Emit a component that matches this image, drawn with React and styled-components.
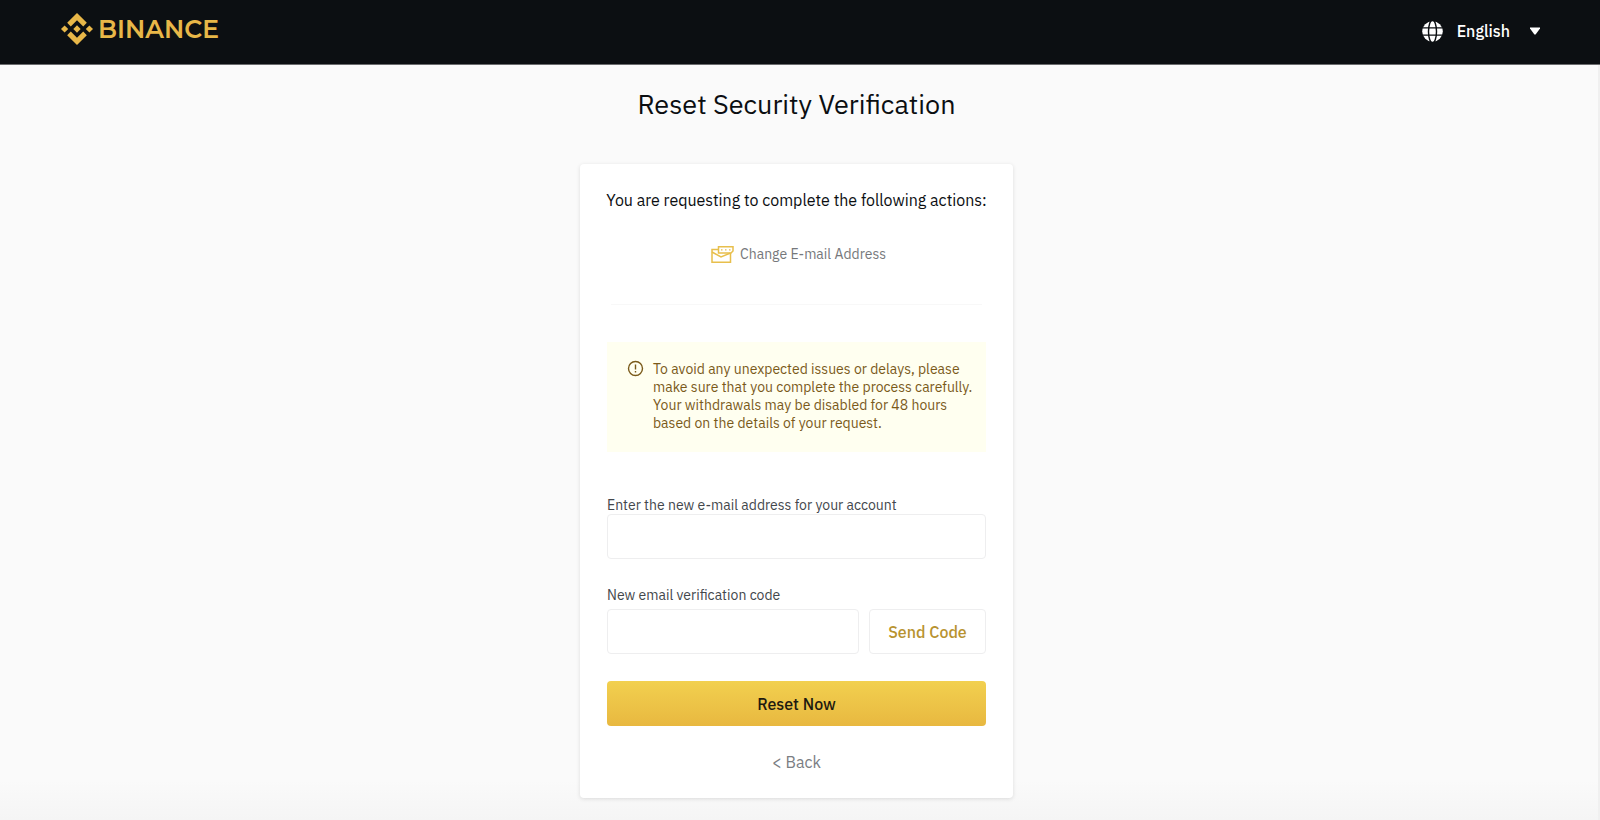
import React, { useState } from 'react';
import styled, { createGlobalStyle } from 'styled-components';

const GlobalStyle = createGlobalStyle`
  * {
    box-sizing: border-box;
  }

  body {
    margin: 0;
    background: #fafafa;
    color: #0b0e11;
    font-family: 'IBM Plex Sans', Roboto, 'Liberation Sans', sans-serif;
  }

  button,
  input {
    font-family: inherit;
  }
`;

const Page = styled.div`
  display: flex;
  flex-direction: column;
  min-height: 100vh;
  background: linear-gradient(to top, #f5f5f5, #fafafa 40px);
`;

const Header = styled.header`
  display: flex;
  justify-content: space-between;
  align-items: center;
  height: 65px;
  padding: 0 60px 2px 61px;
  background: #0c0f12;
  border-bottom: 1px solid #6b6c6e;
`;

const Brand = styled.a`
  display: flex;
  align-items: center;
  gap: 5px;
  padding-bottom: 4px;
  color: #e8b748;
  font-family: Montserrat, Lato, 'Open Sans', sans-serif;
  font-size: 25px;
  font-weight: 600;
  line-height: 32px;
  text-decoration: none;
`;

const LanguageButton = styled.button`
  display: flex;
  align-items: center;
  padding: 0;
  background: none;
  border: none;
  color: #fff;
  font-size: 16px;
  font-weight: 500;
  line-height: 22px;
  cursor: pointer;
`;

const LanguageName = styled.span`
  margin: 0 20px 0 14px;
`;

const Main = styled.main`
  flex: 1;
  display: flex;
  flex-direction: column;
  align-items: center;
  padding: 19px 5px 21px 0;
  border-right: 2px solid #f0f0f0;
`;

const Title = styled.h1`
  margin: 0 0 40px;
  font-size: 27px;
  font-weight: 400;
  line-height: 40px;
`;

const Card = styled.form`
  width: 100%;
  max-width: 433px;
  padding: 24px 27px;
  background: #fff;
  border-radius: 4px;
  box-shadow: 0 1px 4px rgba(0, 0, 0, 0.12);
`;

const Intro = styled.p`
  margin: 0 -8px;
  font-size: 16px;
  line-height: 24px;
  text-align: center;
`;

const Action = styled.div`
  display: flex;
  justify-content: center;
  align-items: center;
  gap: 6px;
  padding: 32px 0 40px 4px;
  color: #76787b;
  font-size: 14px;
  line-height: 20px;
`;

const Divider = styled.hr`
  margin: 0 4px 37px;
  border: none;
  border-top: 1px solid #f8f8f8;
`;

const Notice = styled.div`
  display: flex;
  align-items: flex-start;
  gap: 9px;
  margin-bottom: 44px;
  padding: 18px 8px 20px 20px;
  background: #fffff0;
  color: #7a5a1a;
  font-size: 14px;
  line-height: 18px;
`;

const NoticeText = styled.p`
  margin: 0;
`;

const Label = styled.label`
  display: block;
  margin-bottom: ${({ $gap }) => $gap || 0}px;
  color: #43474c;
  font-size: 14px;
  line-height: 18px;
`;

const Input = styled.input`
  display: block;
  width: 100%;
  min-width: 0;
  height: 45px;
  padding: 0 12px;
  background: #fff;
  border: 1px solid #eeeeef;
  border-radius: 4px;
  font-size: 16px;
`;

const Field = styled.div`
  margin-bottom: 27px;
`;

const CodeRow = styled.div`
  display: flex;
  gap: 10px;
`;

const SendButton = styled.button`
  flex: 0 0 117px;
  height: 45px;
  padding: 0;
  background: #fff;
  border: 1px solid #eeeeef;
  border-radius: 4px;
  color: #b8932f;
  font-size: 16px;
  font-weight: 500;
  cursor: pointer;
`;

const SubmitButton = styled.button`
  display: block;
  width: 100%;
  height: 45px;
  margin-bottom: 24px;
  background: linear-gradient(#f2d04f, #e8b840);
  border: none;
  border-radius: 4px;
  color: #1e1a10;
  font-size: 16px;
  font-weight: 500;
  cursor: pointer;
`;

const BackLink = styled.a`
  display: block;
  color: #7b7e83;
  font-size: 16px;
  line-height: 24px;
  text-align: center;
  text-decoration: none;
`;

const Logo = () => (
  <svg width="32" height="32" viewBox="0 0 126.61 126.61" fill="currentColor" aria-hidden="true">
    <path d="M38.73 53.2l24.59-24.58 24.6 24.6 14.3-14.31L63.32 0 24.43 38.9z" />
    <path d="M0 63.31L14.3 49l14.31 14.31-14.31 14.3z" />
    <path d="M38.73 73.41l24.59 24.59 24.6-24.6 14.31 14.29-38.9 38.91-38.91-38.88z" />
    <path d="M98 63.31L112.3 49l14.31 14.3-14.31 14.32z" />
    <path d="M77.83 63.3L63.32 48.78 48.8 63.3 63.32 77.83z" />
  </svg>
);

const GlobeIcon = () => (
  <svg width="21" height="21" viewBox="0 0 22 22" aria-hidden="true">
    <circle cx="11" cy="11" r="10.8" fill="#fff" />
    <g fill="none" stroke="#0c0f12" strokeWidth="1.5">
      <path d="M0 7.2h22M0 14.8h22" />
      <ellipse cx="11" cy="11" rx="4.2" ry="12" />
    </g>
  </svg>
);

const CaretIcon = () => (
  <svg width="10" height="8" viewBox="0 0 10 8" fill="#fff" aria-hidden="true">
    <path d="M0 .5h10v1L5.6 7.5H4.4L0 1.5z" />
  </svg>
);

const MailIcon = () => (
  <svg width="23" height="17" viewBox="0 0 23 17" fill="none" stroke="#e8bf4c" strokeWidth="1.5" aria-hidden="true">
    <path d="M7 3.5H1v12.7h18.5V7" />
    <path d="M1 6l9 5 9.5-4" />
    <path d="M7.5.8H22V5l-2 2H7.5z" />
    <path d="M10 3.9h1.5M14 3.9h1.5M18 3.9h1.5" strokeWidth="1.2" />
  </svg>
);

const WarningIcon = () => (
  <svg width="17" height="17" viewBox="0 0 17 17" fill="none" stroke="currentColor" strokeWidth="1.4" aria-hidden="true">
    <circle cx="8.5" cy="8.5" r="7" />
    <path d="M8.5 4.5v5M8.5 11v1.5" />
  </svg>
);

const App = () => {
  const [email, setEmail] = useState('');
  const [code, setCode] = useState('');

  return (
    <Page>
      <GlobalStyle />
      <Header>
        <Brand href="#">
          <Logo />
          BINANCE
        </Brand>
        <LanguageButton type="button">
          <GlobeIcon />
          <LanguageName>English</LanguageName>
          <CaretIcon />
        </LanguageButton>
      </Header>

      <Main>
        <Title>Reset Security Verification</Title>
        <Card onSubmit={(e) => e.preventDefault()}>
          <Intro>You are requesting to complete the following actions:</Intro>
          <Action>
            <MailIcon />
            Change E-mail Address
          </Action>
          <Divider />

          <Notice>
            <WarningIcon />
            <NoticeText>
              To avoid any unexpected issues or delays, please
              <br />
              make sure that you complete the process carefully.
              <br />
              Your withdrawals may be disabled for 48 hours
              <br />
              based on the details of your request.
            </NoticeText>
          </Notice>

          <Field>
            <Label htmlFor="email">Enter the new e-mail address for your account</Label>
            <Input id="email" type="email" value={email} onChange={(e) => setEmail(e.target.value)} />
          </Field>

          <Field>
            <Label htmlFor="code" $gap={5}>New email verification code</Label>
            <CodeRow>
              <Input id="code" type="text" value={code} onChange={(e) => setCode(e.target.value)} />
              <SendButton type="button">Send Code</SendButton>
            </CodeRow>
          </Field>

          <SubmitButton type="submit">Reset Now</SubmitButton>
          <BackLink href="#">&lt; Back</BackLink>
        </Card>
      </Main>
    </Page>
  );
};

export default App;
